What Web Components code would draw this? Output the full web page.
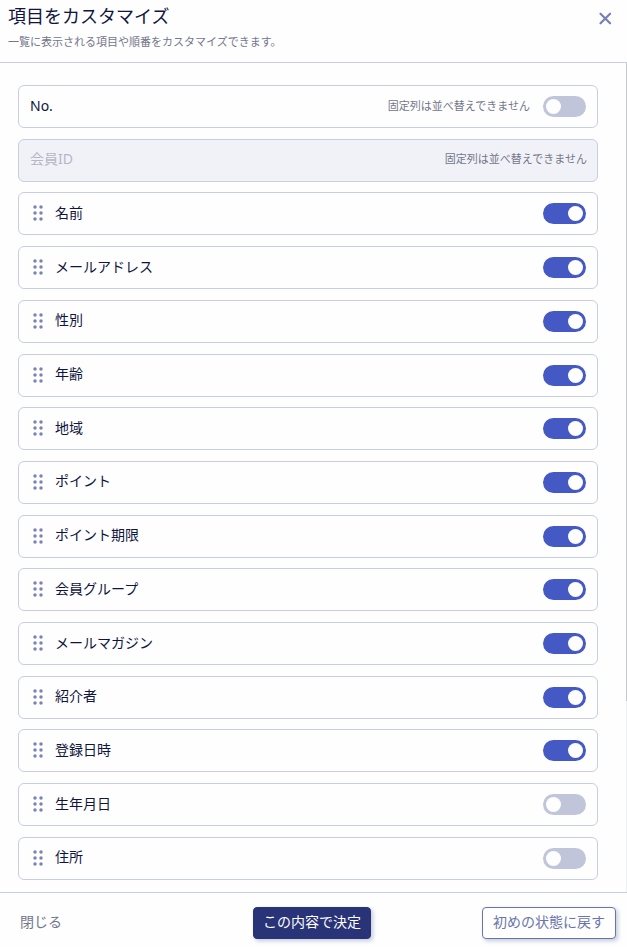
<!DOCTYPE html>
<html lang="ja">
<head>
<meta charset="utf-8">
<meta name="viewport" content="width=device-width">
<title>項目をカスタマイズ</title>
<style>
  body {
    margin: 0;
    background: #fefefe;
    color: #10153f;
    font-family: "Noto Sans", "Noto Sans CJK JP", sans-serif;
    font-size: 14px;
    --line: #c6cee0;
    --muted: #73768c;
    --accent: #6a74ac;
  }
</style>
</head>
<body>
<customize-dialog></customize-dialog>

<script>
class BaseElement extends HTMLElement {
  constructor() {
    super();
    this.attachShadow({ mode: "open" }).innerHTML = this.constructor.markup;
  }
}

customElements.define("toggle-switch", class extends BaseElement {
  static markup = `
    <style>
      :host { display: block; flex: none; }
      input {
        appearance: none; display: flex; align-items: center;
        box-sizing: border-box; width: 43px; height: 21px; margin: 0; padding: 0 3px;
        border-radius: 11px; background: #c1c5d9; cursor: pointer;
      }
      input::before { content: ""; width: 15px; height: 15px; border-radius: 50%; background: #fefefe; }
      input:checked { background: #4559c5; justify-content: flex-end; }
    </style>
    <input type="checkbox" role="switch">`;
  connectedCallback() {
    const input = this.shadowRoot.querySelector("input");
    input.checked = this.hasAttribute("checked");
    input.setAttribute("aria-label", this.getAttribute("label") || "");
  }
});

customElements.define("drag-handle", class extends BaseElement {
  static markup = `
    <style>
      :host { display: block; flex: none; cursor: grab; }
      svg { display: block; }
    </style>
    <svg width="12" height="17" viewBox="0 0 12 17" fill="#7983b5" aria-hidden="true">
      <circle cx="3" cy="2" r="1.75"/><circle cx="9" cy="2" r="1.75"/>
      <circle cx="3" cy="8" r="1.75"/><circle cx="9" cy="8" r="1.75"/>
      <circle cx="3" cy="14" r="1.75"/><circle cx="9" cy="14" r="1.75"/>
    </svg>`;
});

customElements.define("column-row", class extends BaseElement {
  static markup = `
    <style>
      :host {
        display: flex; align-items: center; box-sizing: border-box;
        min-height: 43px; padding: 0 11px; gap: 11px;
        border: 1px solid var(--line); border-radius: 6px; line-height: 20px;
      }
      :host([locked]) { background: #f1f2f7; color: #b5b7c6; padding-right: 10px; }
      drag-handle { margin-left: 2px; }
      .label, .note { padding-bottom: 2px; }
      .label { flex: 1; }
      .note { color: var(--muted); font-size: 11px; }
      .note + toggle-switch { margin-left: 2px; }
    </style>
    <drag-handle></drag-handle>
    <span class="label"><slot></slot></span>
    <span class="note">固定列は並べ替えできません</span>
    <toggle-switch></toggle-switch>`;
  connectedCallback() {
    const root = this.shadowRoot;
    const toggle = root.querySelector("toggle-switch");
    if (this.hasAttribute("fixed")) root.querySelector("drag-handle").remove();
    else root.querySelector(".note").remove();
    if (this.hasAttribute("locked")) toggle.remove();
    else {
      const fresh = document.createElement("toggle-switch");
      fresh.setAttribute("label", this.textContent);
      if (this.hasAttribute("on")) fresh.setAttribute("checked", "");
      toggle.replaceWith(fresh);
    }
  }
});

customElements.define("dialog-header", class extends BaseElement {
  static markup = `
    <style>
      :host {
        display: flex; justify-content: space-between; align-items: flex-start;
        box-sizing: border-box; min-height: 63px; padding: 4px 12px 0 8px;
        border-bottom: 1px solid var(--line);
      }
      h1 { margin: 0 0 4px; font-size: 18px; font-weight: 400; line-height: 24px; }
      p { margin: 0; font-size: 11px; line-height: 20px; color: var(--muted); }
      button { display: flex; margin: 5px 0 0; padding: 0; border: 0; background: none; cursor: pointer; }
    </style>
    <div>
      <h1><slot name="title"></slot></h1>
      <p><slot name="description"></slot></p>
    </div>
    <button type="button" aria-label="閉じる">
      <svg width="20" height="20" viewBox="0 0 20 20" fill="none" stroke="#7681b3" stroke-width="2.2" stroke-linecap="round">
        <path d="M5.5 4.7 15.1 14.3M15.1 4.7 5.5 14.3"/>
      </svg>
    </button>`;
});

customElements.define("action-button", class extends BaseElement {
  static markup = `
    <style>
      :host { display: block; }
      button {
        display: block; box-sizing: border-box; min-height: 32px; padding: 0 11px 2px;
        border: 1px solid transparent; border-radius: 4px; background: none; color: var(--muted);
        font: inherit; line-height: 20px; white-space: nowrap; cursor: pointer;
      }
      :host([kind="primary"]) button, :host([kind="outline"]) button { box-shadow: 2px 2px 4px #c3cadb; }
      :host([kind="primary"]) button {
        background: #293377; border-color: #293377; color: #fefefe; padding: 0 9px 2px;
      }
      :host([kind="outline"]) button {
        background: #fefefe; border-color: var(--accent); color: var(--accent); padding: 0 10px 2px;
      }
    </style>
    <button type="button"><slot></slot></button>`;
});

customElements.define("customize-dialog", class extends BaseElement {
  static markup = `
    <style>
      :host { display: flex; flex-direction: column; min-height: 100vh; }
      main { flex: 1; display: flex; }
      .rows {
        flex: 1; display: flex; flex-direction: column; justify-content: space-between;
        gap: 10px; padding: 22px 28px 12px 18px;
      }
      .scroll { width: 1px; display: flex; flex-direction: column; background: #eeeff3; }
      .scroll::before { content: ""; flex: 0 0 77%; background: #c6c7ca; }
      footer {
        display: grid; grid-template-columns: 1fr auto 1fr; align-items: center;
        box-sizing: border-box; min-height: 55px; padding: 6px 11px 0 8px; border-top: 1px solid var(--line);
      }
      .end { justify-self: end; }
    </style>
    <dialog-header>
      <span slot="title">項目をカスタマイズ</span>
      <span slot="description">一覧に表示される項目や順番をカスタマイズできます。</span>
    </dialog-header>
    <main>
      <div class="rows">
        <column-row fixed>No.</column-row>
        <column-row fixed locked>会員ID</column-row>
        <column-row on>名前</column-row>
        <column-row on>メールアドレス</column-row>
        <column-row on>性別</column-row>
        <column-row on>年齢</column-row>
        <column-row on>地域</column-row>
        <column-row on>ポイント</column-row>
        <column-row on>ポイント期限</column-row>
        <column-row on>会員グループ</column-row>
        <column-row on>メールマガジン</column-row>
        <column-row on>紹介者</column-row>
        <column-row on>登録日時</column-row>
        <column-row>生年月日</column-row>
        <column-row>住所</column-row>
      </div>
      <div class="scroll" aria-hidden="true"></div>
    </main>
    <footer>
      <action-button>閉じる</action-button>
      <action-button kind="primary">この内容で決定</action-button>
      <action-button kind="outline" class="end">初めの状態に戻す</action-button>
    </footer>`;
});
</script>
</body>
</html>
